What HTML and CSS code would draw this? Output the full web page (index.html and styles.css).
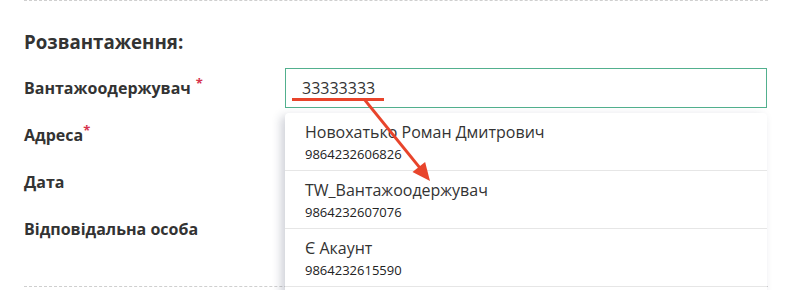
FILE: index.html
```html
<!DOCTYPE html>
<html lang="uk">
<head>
<meta charset="utf-8">
<link rel="stylesheet" href="styles.css">
</head>
<body>
<div class="page">
  <section class="section">
    <h2 class="heading">Розвантаження:</h2>
    <div class="form">
      <div class="label">Вантажоодержувач<span class="req req-spaced">*</span></div>
      <div class="field">
        <div class="input">33333333</div>
        <div class="dropdown">
          <div class="item"><div class="name">Новохатько Роман Дмитрович</div><div class="code">9864232606826</div></div>
          <div class="item"><div class="name">TW_Вантажоодержувач</div><div class="code">9864232607076</div></div>
          <div class="item"><div class="name">Є Акаунт</div><div class="code">9864232615590</div></div>
        </div>
      </div>
      <div class="label">Адреса<span class="req">*</span></div>
      <div class="field"></div>
      <div class="label">Дата</div>
      <div class="field"></div>
      <div class="label">Відповідальна особа</div>
      <div class="field"></div>
    </div>
  </section>
  <svg class="annot" width="794" height="290" viewBox="0 0 794 290">
    <line x1="292" y1="99.5" x2="384" y2="99.5" stroke="#e8442b" stroke-width="3"/>
    <line x1="364" y1="99" x2="420" y2="168" stroke="#e8442b" stroke-width="2.8"/>
    <polygon points="430,181 412.5,171.9 425.1,161.9" fill="#e8442b"/>
  </svg>
</div>
</body>
</html>
```
FILE: styles.css
```css
html, body {
  margin: 0;
  padding: 0;
  background: #fff;
}
body {
  font-family: "Open Sans", "Liberation Sans", sans-serif;
  color: #333;
  overflow: hidden;
  width: 794px;
  height: 290px;
}
.page {
  position: relative;
  width: 794px;
  height: 290px;
  overflow: hidden;
}
.section {
  margin: 0 26px 0 24px;
  border-top: 1px dashed #cfcfcf;
  border-bottom: 1px dashed #cfcfcf;
  padding: 0 0 37px 0;
}
.heading {
  margin: 29px 0 14px 0;
  font-size: 18.7px;
  line-height: 24px;
  font-weight: 700;
  color: #333;
}
.form {
  display: grid;
  grid-template-columns: 261px 482px;
  grid-auto-rows: 40px;
  row-gap: 7px;
}
.label {
  display: flex;
  align-items: center;
  font-size: 16px;
  font-weight: 700;
  color: #333;
  white-space: nowrap;
}
.req {
  color: #d6334d;
  font-size: 13px;
  align-self: flex-start;
  margin-top: 6px;
  margin-left: 0;
}
.req-spaced {
  margin-left: 5px;
}
.field {
  position: relative;
}
.input {
  box-sizing: border-box;
  height: 40px;
  border: 1px solid #52b08e;
  padding: 0 16px;
  font-size: 16px;
  line-height: 38px;
  color: #333;
}
.dropdown {
  position: absolute;
  left: 0;
  top: 45px;
  width: 482px;
  height: 220px;
  background: #fff;
  border-radius: 4px;
  box-shadow: -4px 3px 10px rgba(40, 50, 80, 0.22);
  z-index: 2;
}
.item {
  box-sizing: border-box;
  height: 58px;
  border-bottom: 1px solid #e6e6e6;
  padding: 7px 20px 0 20px;
}
.name {
  font-size: 16px;
  line-height: 24px;
  color: #333;
}
.code {
  font-size: 13px;
  line-height: 20px;
  color: #222;
}
.annot {
  position: absolute;
  left: 0;
  top: 0;
  z-index: 5;
  pointer-events: none;
}
```
